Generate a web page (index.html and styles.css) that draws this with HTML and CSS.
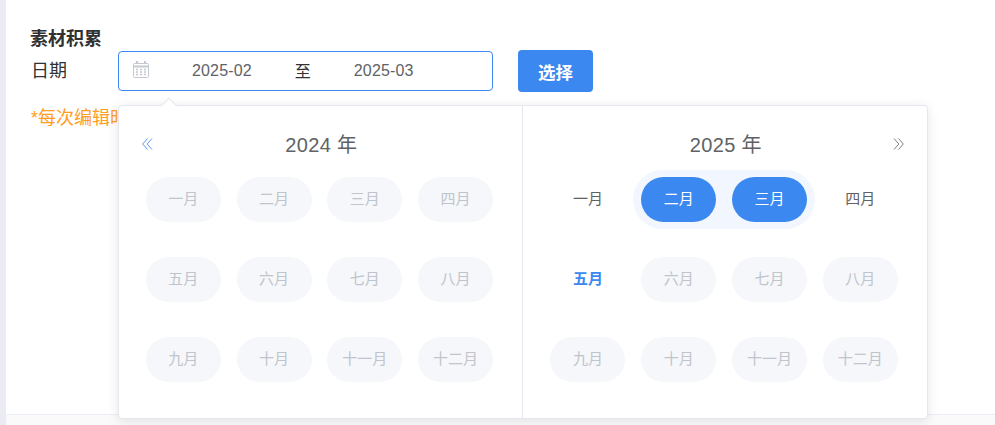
FILE: index.html
```html
<!DOCTYPE html>
<html lang="zh-CN">
<head>
    <meta charset="UTF-8">
    <title>素材积累</title>
    <link rel="stylesheet" href="styles.css">
</head>
<body>
    <div class="page">
        <div class="card">
            <h3 class="card-title">素材积累</h3>
            <div class="form-row">
                <label class="form-label">日期</label>
                <div class="date-box">
                    <svg class="date-icon" width="16" height="17" viewBox="0 0 16 17" fill="none" stroke="#c4c8d2">
                        <rect x="0.5" y="2.5" width="15" height="14" rx="1"/>
                        <path d="M0.5 5.5h15" stroke-width="2"/>
                        <path d="M4 0v3M12 0v3" stroke-width="2"/>
                        <path d="M3 8.5h2M7 8.5h2M11 8.5h2M3 11h2M7 11h2M11 11h2M3 13.500h2M7 13.500h2M11 13.500h2" stroke-width="1.4"/>
                    </svg>
                    <span class="date-val date-from">2025-02</span>
                    <span class="date-sep">至</span>
                    <span class="date-val date-to">2025-03</span>
                </div>
                <button class="btn-choose">选择</button>
            </div>
            <p class="tip">*每次编辑时</p>
        </div>

        <div class="picker">
            <div class="picker-arrow"></div>
            <div class="panel panel-left">
                <div class="panel-head">
                    <svg class="nav nav-prev" width="11" height="12" viewBox="0 0 11 12" fill="none" stroke="#5b9bf2">
                        <path d="M5.500 0.500L0.700 6l4.800 5.500M10 0.500L5.200 6l4.800 5.500"/>
                    </svg>
                    <span>2024 年</span>
                </div>
                <div class="months">
                    <div class="month off">一月</div>
                    <div class="month off">二月</div>
                    <div class="month off">三月</div>
                    <div class="month off">四月</div>
                    <div class="month off">五月</div>
                    <div class="month off">六月</div>
                    <div class="month off">七月</div>
                    <div class="month off">八月</div>
                    <div class="month off">九月</div>
                    <div class="month off">十月</div>
                    <div class="month off">十一月</div>
                    <div class="month off">十二月</div>
                </div>
            </div>
            <div class="panel panel-right">
                <div class="panel-head">
                    <span>2025 年</span>
                    <svg class="nav nav-next" width="11" height="12" viewBox="0 0 11 12" fill="none" stroke="#808080">
                        <path d="M1 0.500L5.800 6l-4.800 5.500M5.500 0.500L10.300 6l-4.800 5.500"/>
                    </svg>
                </div>
                <div class="months">
                    <div class="month">一月</div>
                    <div class="range">
                        <div class="month picked">二月</div>
                        <div class="month picked">三月</div>
                    </div>
                    <div class="month">四月</div>
                    <div class="month today">五月</div>
                    <div class="month off">六月</div>
                    <div class="month off">七月</div>
                    <div class="month off">八月</div>
                    <div class="month off">九月</div>
                    <div class="month off">十月</div>
                    <div class="month off">十一月</div>
                    <div class="month off">十二月</div>
                </div>
            </div>
        </div>
    </div>
</body>
</html>
```

FILE: styles.css
```css
* {
    box-sizing: border-box;
}
html, body {
    margin: 0;
    height: 100%;
}
body {
    background: #fafafa;
    font-family: "Liberation Sans", "Noto Sans CJK SC", sans-serif;
    color: #303133;
    overflow: hidden;
}
.page {
    position: relative;
    height: 425px;
    border-left: 6px solid #ebebf3;
}
.card {
    height: 415px;
    padding: 27px 25px 0;
    background: #fff;
    border-bottom: 1px solid #ebeef5;
}
.card-title {
    margin: 0 0 0 -1px;
    font-size: 18px;
    line-height: 24px;
    font-weight: bold;
    color: #303133;
}
.form-row {
    display: flex;
    align-items: flex-start;
}
.form-label {
    width: 87px;
    font-size: 18px;
    line-height: 40px;
}
.date-box {
    display: flex;
    align-items: center;
    width: 375px;
    height: 40px;
    padding-left: 14px;
    border: 1px solid #3a88f0;
    border-radius: 4px;
    font-size: 16px;
}
.date-icon {
    flex: none;
    margin-top: -3px;
}
.date-val {
    color: #606266;
    letter-spacing: 0.15px;
}
.date-from {
    margin-left: 43px;
}
.date-sep {
    margin: -3px 26px 0 43px;
    color: #303133;
}
.date-to {
    margin-left: 17px;
}
.btn-choose {
    width: 75px;
    height: 42px;
    margin: -1px 0 0 25px;
    border: none;
    border-radius: 4px;
    background: #3a88f0;
    color: #fff;
    font: bold 17.5px "Liberation Sans", "Noto Sans CJK SC", sans-serif;
}
.tip {
    margin: 13px 0 0;
    font-size: 18px;
    line-height: 26px;
    color: #ff9d1e;
}

/* date popup */
.picker {
    position: absolute;
    left: 112px;
    top: 105px;
    display: flex;
    width: 810px;
    height: 314px;
    background: #fff;
    border: 1px solid #e4e7ed;
    border-radius: 4px;
    box-shadow: 0 2px 12px 0 rgba(0, 0, 0, 0.1);
}
.picker-arrow {
    position: absolute;
    left: 44px;
    top: -6px;
    width: 12px;
    height: 12px;
    background: #fff;
    border-top: 1px solid #e4e7ed;
    border-left: 1px solid #e4e7ed;
    transform: rotate(45deg);
}
.panel {
    position: relative;
    width: 404px;
    padding-left: 26.8px;
}
.panel-left {
    border-right: 1px solid #e4e7ed;
}
.panel-right {
    padding-left: 27.4px;
}
.panel-head {
    width: 348px;
    height: 71px;
    padding: 25px 0 0 3px;
    text-align: center;
    font-size: 20px;
    line-height: 28px;
    letter-spacing: 0.35px;
    color: #606266;
}
.nav {
    position: absolute;
    top: 32px;
}
.nav-prev {
    left: 23px;
}
.nav-next {
    right: 23px;
}
.months {
    display: grid;
    grid-template-columns: repeat(4, 75px);
    grid-auto-rows: 45px;
    gap: 35px 15.75px;
}
.month {
    width: 75px;
    height: 45px;
    border-radius: 23px;
    text-align: center;
    font-size: 15px;
    line-height: 44px;
    color: #606266;
}
.month.off {
    background: #f5f7fa;
    color: #c0c4cc;
}
.month.picked {
    background: #3a88f0;
    color: #fff;
}
.month.today {
    color: #3a88f0;
    font-weight: bold;
}
.range {
    grid-column: span 2;
    display: flex;
    gap: 15.75px;
    height: 59px;
    margin: -7px -8px;
    padding: 7px 8px;
    border-radius: 30px;
    background: #f2f6fe;
}
```
